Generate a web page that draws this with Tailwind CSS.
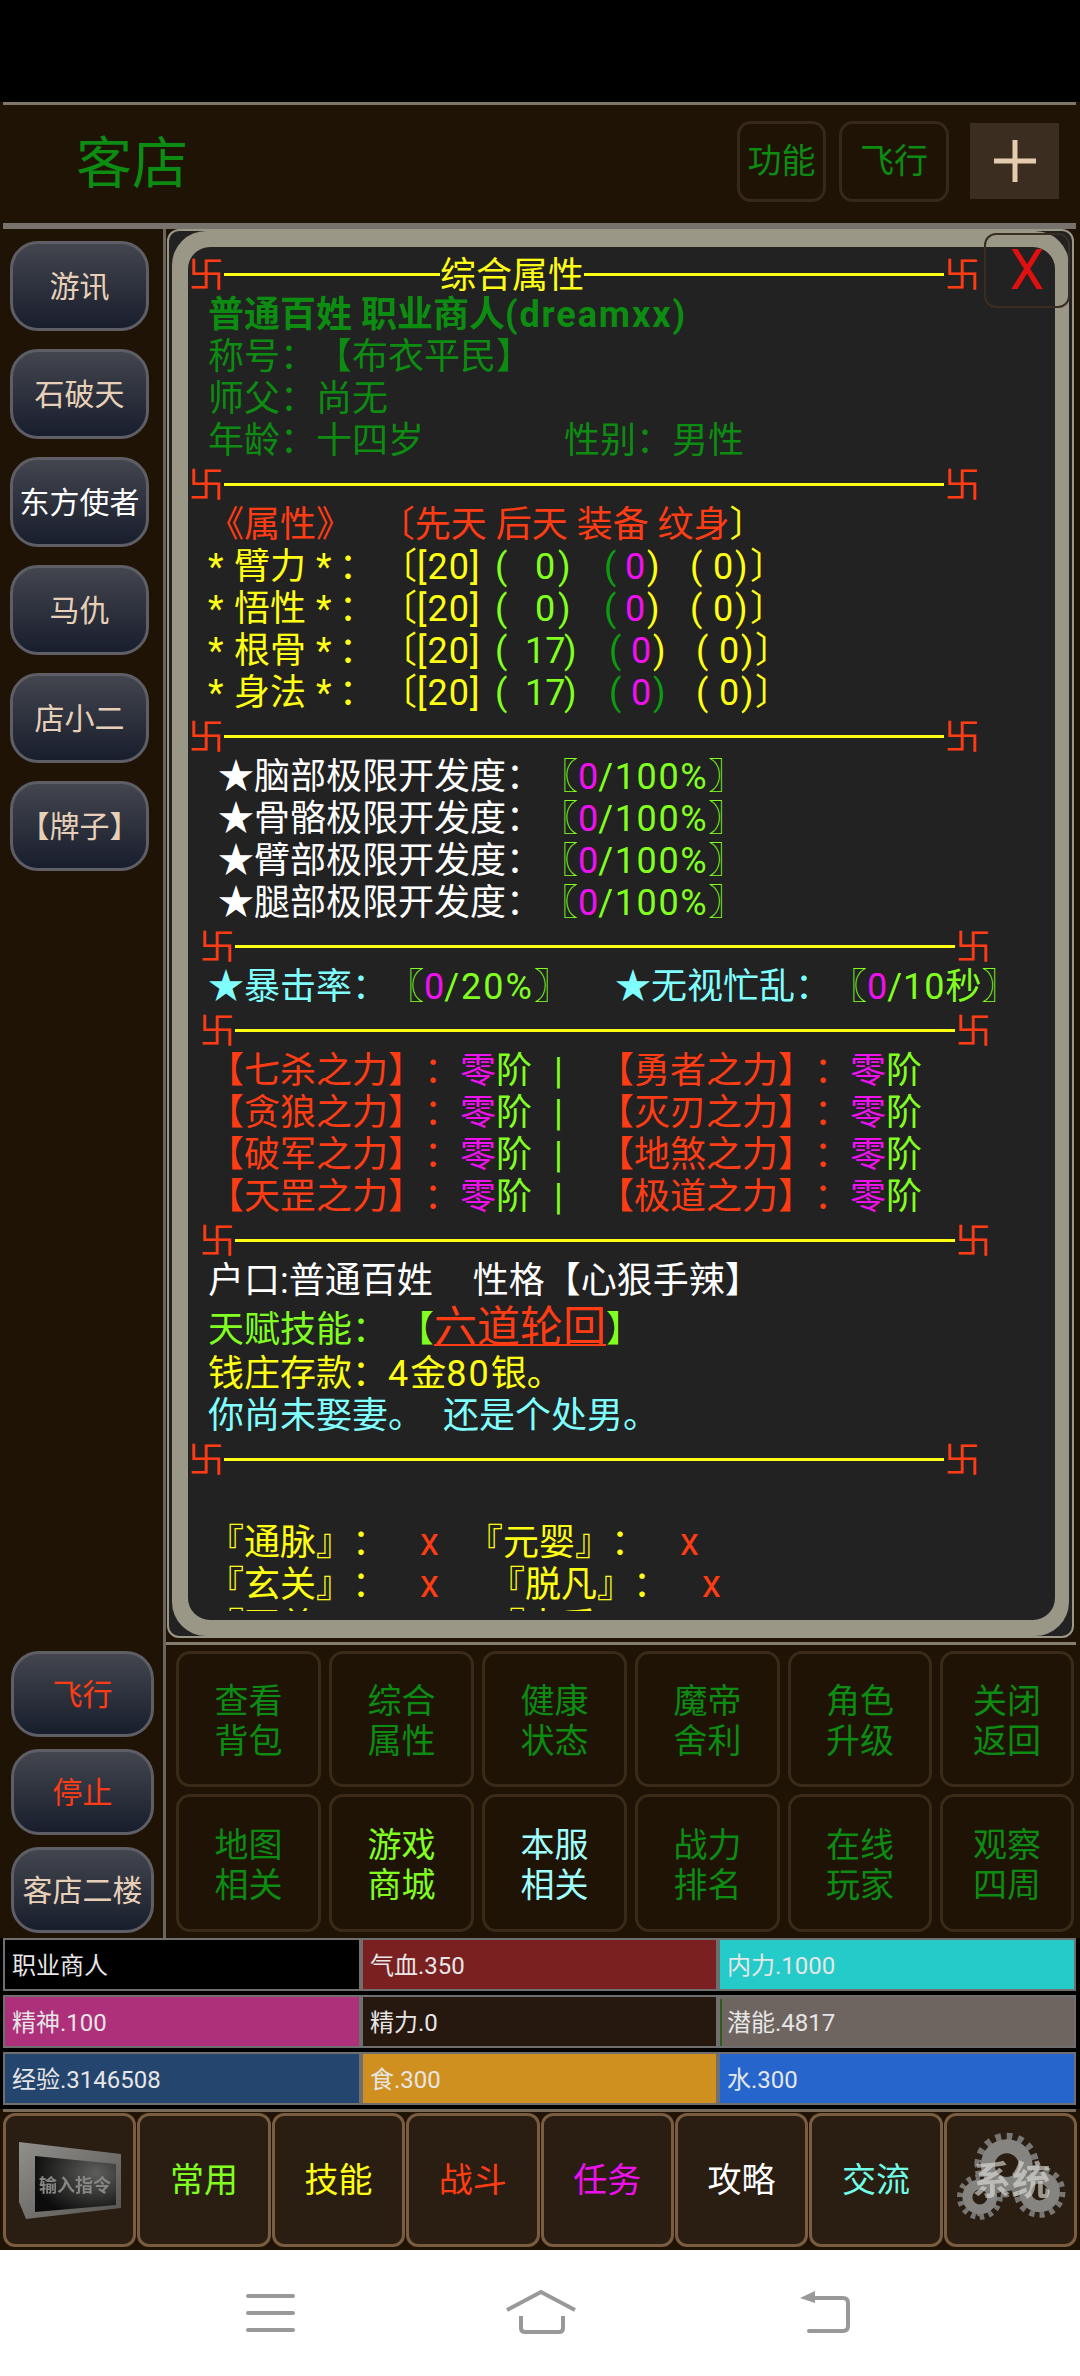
<!DOCTYPE html>
<html lang="zh-CN">
<head>
<meta charset="utf-8">
<script src="https://cdn.jsdelivr.net/npm/@tailwindcss/browser@4"></script>
</head>
<body class="m-0 bg-[#1f1305]">
<div class="w-[1080px] h-[2376px] overflow-hidden flex flex-col bg-[#1f1305] [font-family:Roboto,'Noto_Sans_CJK_SC',sans-serif] [text-spacing-trim:space-all]">
  <div class="h-[102px] bg-black shrink-0"></div>
  <div class="h-[3px] ml-[3px] mr-[4px] bg-[#7f766b] shrink-0"></div>

  <header class="h-[118px] shrink-0 flex items-center">
    <div class="pl-[76px] text-[56px] leading-none text-[#0c8c10] flex-1">客店</div>
    <div class="w-[89px] h-[81px] mb-[6px] flex items-center justify-center rounded-[14px] border-[3px] border-[#36281a] text-[34px] text-[#0c8c10]">功能</div>
    <div class="w-[110px] h-[81px] mb-[6px] ml-[13px] flex items-center justify-center rounded-[14px] border-[3px] border-[#36281a] text-[34px] text-[#0c8c10]">飞行</div>
    <div class="w-[89px] h-[76px] mb-[6px] ml-[21px] mr-[21px] flex items-center justify-center bg-[#3b2e20]">
      <svg width="42" height="42" viewBox="0 0 42 42"><path d="M21 0V42M0 21H42" stroke="#e6ccae" stroke-width="5" fill="none"/></svg>
    </div>
  </header>
  <div class="h-[6px] ml-[3px] mr-[4px] bg-[#77736c] shrink-0"></div>

  <div class="h-[1709px] shrink-0 flex">
    <aside class="w-[163px] shrink-0 flex flex-col justify-between">
      <div class="pt-[12px] pl-[10px] flex flex-col gap-[18px]">
        <div class="w-[139px] h-[90px] rounded-[28px] border-[3px] border-[#5e5e66] bg-gradient-to-b from-[#43464e] to-[#191e2d] flex items-center justify-center text-[30px] text-[#e8d0b8]">游讯</div>
        <div class="w-[139px] h-[90px] rounded-[28px] border-[3px] border-[#5e5e66] bg-gradient-to-b from-[#43464e] to-[#191e2d] flex items-center justify-center text-[30px] text-[#e8d0b8]">石破天</div>
        <div class="w-[139px] h-[90px] rounded-[28px] border-[3px] border-[#5e5e66] bg-gradient-to-b from-[#43464e] to-[#191e2d] flex items-center justify-center text-[30px] text-white">东方使者</div>
        <div class="w-[139px] h-[90px] rounded-[28px] border-[3px] border-[#5e5e66] bg-gradient-to-b from-[#43464e] to-[#191e2d] flex items-center justify-center text-[30px] text-[#e8d0b8]">马仇</div>
        <div class="w-[139px] h-[90px] rounded-[28px] border-[3px] border-[#5e5e66] bg-gradient-to-b from-[#43464e] to-[#191e2d] flex items-center justify-center text-[30px] text-[#e8d0b8]">店小二</div>
        <div class="w-[139px] h-[90px] rounded-[28px] border-[3px] border-[#5e5e66] bg-gradient-to-b from-[#43464e] to-[#191e2d] flex items-center justify-center text-[30px] text-[#e8d0b8]">【牌子】</div>
      </div>
      <div class="pb-[5px] pl-[11px] flex flex-col gap-[12px]">
        <div class="w-[143px] h-[86px] rounded-[28px] border-[3px] border-[#5e5e66] bg-gradient-to-b from-[#43464e] to-[#191e2d] flex items-center justify-center text-[30px] text-[#ff3c14]">飞行</div>
        <div class="w-[143px] h-[86px] rounded-[28px] border-[3px] border-[#5e5e66] bg-gradient-to-b from-[#43464e] to-[#191e2d] flex items-center justify-center text-[30px] text-[#ff3c14]">停止</div>
        <div class="w-[143px] h-[86px] rounded-[28px] border-[3px] border-[#5e5e66] bg-gradient-to-b from-[#43464e] to-[#191e2d] flex items-center justify-center text-[30px] text-[#e8d0b8]">客店二楼</div>
      </div>
    </aside>
    <div class="w-[3px] shrink-0 bg-[#6a665e]"></div>

    <main class="flex-1 flex flex-col min-w-0">
      <section class="relative h-[1409px] ml-[1px] mr-[6px] rounded-[12px] border-2 border-[#9a9786] bg-[#222222] px-[3px] py-0 shrink-0">
        <div class="h-full rounded-[34px] bg-[#9a9786] pl-[16px] pr-[14px] pt-[16px] pb-[16px]">
          <div class="h-full rounded-[22px] bg-[#222222] overflow-hidden">
            <div class="h-[1364px] overflow-hidden pt-[4px] flex flex-col *:shrink-0 text-[36px] leading-[45px] whitespace-pre">
              <div class="h-[42px] leading-[42px] text-[#ffff14] [font-family:'Noto_Sans_CJK_SC',sans-serif]"><span class="text-[#ff3c14]">卐</span><span class="bg-[linear-gradient(#ffff14,#ffff14)] bg-no-repeat bg-[length:100%_3px] bg-[position:0_27px]">——————</span>综合属性<span class="bg-[linear-gradient(#ffff14,#ffff14)] bg-no-repeat bg-[length:100%_3px] bg-[position:0_27px]">——————————</span><span class="text-[#ff3c14]">卐</span></div>
              <div class="h-[42px] pl-[20px] font-bold text-[#0c8c10]">普通百姓 职业商人<span class="tracking-[1.9px]">(dreamxx)</span></div>
              <div class="h-[42px] pl-[20px] text-[#0c8c10]">称号：【布衣平民】</div>
              <div class="h-[42px] pl-[20px] text-[#0c8c10]">师父：尚无</div>
              <div class="h-[42px] pl-[20px] text-[#0c8c10]">年龄：十四岁<span class="ml-[140px]">性别：男性</span></div>
              <div class="h-[42px] leading-[42px] text-[#ffff14] [font-family:'Noto_Sans_CJK_SC',sans-serif]"><span class="text-[#ff3c14]">卐</span><span class="bg-[linear-gradient(#ffff14,#ffff14)] bg-no-repeat bg-[length:100%_3px] bg-[position:0_27px]">————————————————————</span><span class="text-[#ff3c14]">卐</span></div>

              <div class="h-[42px] pl-[20px] text-[#ff3c14]">《属性》   〔先天 后天 装备 纹身<span class="text-[#ffff14]">〕</span></div>
              <div class="h-[42px] pl-[20px] text-[#ffff14]"><span class="inline-block w-[26px]">*</span><span class="inline-block w-[82px]">臂力</span><span class="inline-block w-[23px]">*</span><span class="inline-block w-[42px]">：</span><span class="inline-block w-[36px]">〔</span><span class="inline-block w-[78px] tracking-[1px]">[20]</span><span class="inline-block w-[40px] text-[#80ff20]">(</span><span class="inline-block w-[23px] text-[#80ff20]">0</span><span class="inline-block w-[46px] text-[#80ff20]">)</span><span class="inline-block w-[21px] text-[#0c9c10]">(</span><span class="inline-block w-[22px] text-[#f010f0]">0</span><span class="inline-block w-[43px]">)</span><span class="inline-block w-[23px]">(</span><span class="inline-block w-[22px]">0</span><span class="inline-block w-[15px]">)</span>〕</div>
              <div class="h-[42px] pl-[20px] text-[#ffff14]"><span class="inline-block w-[26px]">*</span><span class="inline-block w-[82px]">悟性</span><span class="inline-block w-[23px]">*</span><span class="inline-block w-[42px]">：</span><span class="inline-block w-[36px]">〔</span><span class="inline-block w-[78px] tracking-[1px]">[20]</span><span class="inline-block w-[40px] text-[#80ff20]">(</span><span class="inline-block w-[23px] text-[#80ff20]">0</span><span class="inline-block w-[46px] text-[#80ff20]">)</span><span class="inline-block w-[21px] text-[#0c9c10]">(</span><span class="inline-block w-[22px] text-[#f010f0]">0</span><span class="inline-block w-[43px]">)</span><span class="inline-block w-[23px]">(</span><span class="inline-block w-[22px]">0</span><span class="inline-block w-[15px]">)</span>〕</div>
              <div class="h-[42px] pl-[20px] text-[#ffff14]"><span class="inline-block w-[26px]">*</span><span class="inline-block w-[82px]">根骨</span><span class="inline-block w-[23px]">*</span><span class="inline-block w-[42px]">：</span><span class="inline-block w-[36px]">〔</span><span class="inline-block w-[78px] tracking-[1px]">[20]</span><span class="inline-block w-[30px] text-[#80ff20]">(</span><span class="inline-block w-[39px] text-[#80ff20]">17</span><span class="inline-block w-[45px] text-[#80ff20]">)</span><span class="inline-block w-[22px] text-[#0c9c10]">(</span><span class="inline-block w-[22px] text-[#f010f0]">0</span><span class="inline-block w-[43px]">)</span><span class="inline-block w-[23px]">(</span><span class="inline-block w-[22px]">0</span><span class="inline-block w-[14px]">)</span>〕</div>
              <div class="h-[42px] pl-[20px] text-[#ffff14]"><span class="inline-block w-[26px]">*</span><span class="inline-block w-[82px]">身法</span><span class="inline-block w-[23px]">*</span><span class="inline-block w-[42px]">：</span><span class="inline-block w-[36px]">〔</span><span class="inline-block w-[78px] tracking-[1px]">[20]</span><span class="inline-block w-[30px] text-[#80ff20]">(</span><span class="inline-block w-[39px] text-[#80ff20]">17</span><span class="inline-block w-[45px] text-[#80ff20]">)</span><span class="inline-block w-[22px] text-[#0c9c10]">(</span><span class="inline-block w-[22px] text-[#f010f0]">0</span><span class="inline-block w-[43px] text-[#0c9c10]">)</span><span class="inline-block w-[23px]">(</span><span class="inline-block w-[22px]">0</span><span class="inline-block w-[14px]">)</span>〕</div>
              <div class="h-[42px] leading-[42px] text-[#ffff14] [font-family:'Noto_Sans_CJK_SC',sans-serif]"><span class="text-[#ff3c14]">卐</span><span class="bg-[linear-gradient(#ffff14,#ffff14)] bg-no-repeat bg-[length:100%_3px] bg-[position:0_27px]">————————————————————</span><span class="text-[#ff3c14]">卐</span></div>

              <div class="h-[42px] pl-[30px] text-white">★脑部极限开发度：<span class="text-[#80ff20]">〖<span class="text-[#f010f0]">0</span><span class="tracking-[1.6px]">/100%</span>〗</span></div>
              <div class="h-[42px] pl-[30px] text-white">★骨骼极限开发度：<span class="text-[#80ff20]">〖<span class="text-[#f010f0]">0</span><span class="tracking-[1.6px]">/100%</span>〗</span></div>
              <div class="h-[42px] pl-[30px] text-white">★臂部极限开发度：<span class="text-[#80ff20]">〖<span class="text-[#f010f0]">0</span><span class="tracking-[1.6px]">/100%</span>〗</span></div>
              <div class="h-[42px] pl-[30px] text-white">★腿部极限开发度：<span class="text-[#80ff20]">〖<span class="text-[#f010f0]">0</span><span class="tracking-[1.6px]">/100%</span>〗</span></div>
              <div class="h-[42px] leading-[42px] pl-[11px] text-[#ffff14] [font-family:'Noto_Sans_CJK_SC',sans-serif]"><span class="text-[#ff3c14]">卐</span><span class="bg-[linear-gradient(#ffff14,#ffff14)] bg-no-repeat bg-[length:100%_3px] bg-[position:0_27px]">————————————————————</span><span class="text-[#ff3c14]">卐</span></div>

              <div class="h-[42px] pl-[20px] text-[#80ffff]">★暴击率：<span class="text-[#80ff20]">〖<span class="text-[#f010f0]">0</span><span class="tracking-[2px]">/20%</span>〗</span><span class="ml-[45px]">★无视忙乱：</span><span class="text-[#80ff20]">〖<span class="text-[#f010f0]">0</span><span class="tracking-[1px]">/10</span>秒〗</span></div>
              <div class="h-[42px] leading-[42px] pl-[11px] text-[#ffff14] [font-family:'Noto_Sans_CJK_SC',sans-serif]"><span class="text-[#ff3c14]">卐</span><span class="bg-[linear-gradient(#ffff14,#ffff14)] bg-no-repeat bg-[length:100%_3px] bg-[position:0_27px]">————————————————————</span><span class="text-[#ff3c14]">卐</span></div>

              <div class="h-[42px] pl-[20px] text-[#ff3c14]">【七杀之力】：<span class="text-[#f010f0]">零</span><span class="text-[#80ff20]">阶<span class="inline-block w-[22px]"></span><span class="inline-block w-[44px]">|</span></span>【勇者之力】：<span class="text-[#f010f0]">零</span><span class="text-[#80ff20]">阶</span></div>
              <div class="h-[42px] pl-[20px] text-[#ff3c14]">【贪狼之力】：<span class="text-[#f010f0]">零</span><span class="text-[#80ff20]">阶<span class="inline-block w-[22px]"></span><span class="inline-block w-[44px]">|</span></span>【灭刃之力】：<span class="text-[#f010f0]">零</span><span class="text-[#80ff20]">阶</span></div>
              <div class="h-[42px] pl-[20px] text-[#ff3c14]">【破军之力】：<span class="text-[#f010f0]">零</span><span class="text-[#80ff20]">阶<span class="inline-block w-[22px]"></span><span class="inline-block w-[44px]">|</span></span>【地煞之力】：<span class="text-[#f010f0]">零</span><span class="text-[#80ff20]">阶</span></div>
              <div class="h-[42px] pl-[20px] text-[#ff3c14]">【天罡之力】：<span class="text-[#f010f0]">零</span><span class="text-[#80ff20]">阶<span class="inline-block w-[22px]"></span><span class="inline-block w-[44px]">|</span></span>【极道之力】：<span class="text-[#f010f0]">零</span><span class="text-[#80ff20]">阶</span></div>
              <div class="h-[42px] leading-[42px] pl-[11px] text-[#ffff14] [font-family:'Noto_Sans_CJK_SC',sans-serif]"><span class="text-[#ff3c14]">卐</span><span class="bg-[linear-gradient(#ffff14,#ffff14)] bg-no-repeat bg-[length:100%_3px] bg-[position:0_27px]">————————————————————</span><span class="text-[#ff3c14]">卐</span></div>

              <div class="h-[42px] pl-[20px] text-white">户口:普通百姓<span class="ml-[40px]">性格【心狠手辣】</span></div>
              <div class="h-[51px] leading-[53px] pl-[20px] text-[#80ff20]">天赋技能：<span class="ml-[10px]">【</span><span class="text-[43px] text-[#ff3c14] underline decoration-2 underline-offset-[2px]">六道轮回</span>】</div>
              <div class="h-[42px] pl-[20px] text-[#ffff14]">钱庄存款：<span class="tracking-[2px]">4</span>金<span class="tracking-[2px]">80</span>银。</div>
              <div class="h-[42px] pl-[20px] text-[#80ffff]">你尚未娶妻。  <span class="ml-[1px]">还是个处男。</span></div>
              <div class="h-[42px] leading-[42px] text-[#ffff14] [font-family:'Noto_Sans_CJK_SC',sans-serif]"><span class="text-[#ff3c14]">卐</span><span class="bg-[linear-gradient(#ffff14,#ffff14)] bg-no-repeat bg-[length:100%_3px] bg-[position:0_27px]">————————————————————</span><span class="text-[#ff3c14]">卐</span></div>
              <div class="h-[42px]"></div>
              <div class="h-[42px] pl-[20px] text-[#ffff14]">『通脉』：<span class="ml-[32px] text-[38px] text-[#ff3c14]">x</span><span class="ml-[28px]">『元婴』：</span><span class="ml-[33px] text-[38px] text-[#ff3c14]">x</span></div>
              <div class="h-[42px] pl-[20px] text-[#ffff14]">『玄关』：<span class="ml-[32px] text-[38px] text-[#ff3c14]">x</span><span class="ml-[50px]">『脱凡』：</span><span class="ml-[33px] text-[38px] text-[#ff3c14]">x</span></div>
              <div class="h-[42px] pl-[20px] text-[#ffff14]">『至尊』：<span class="ml-[32px] text-[38px] text-[#ff3c14]">x</span><span class="ml-[50px]">『大乘』：</span><span class="ml-[33px] text-[38px] text-[#ff3c14]">x</span></div>
            </div>
          </div>
        </div>
        <div class="absolute top-[2px] right-[2px] w-[86px] h-[75px] rounded-[12px] border-2 border-[#3a2e22] flex items-center justify-center text-[55px] leading-none text-[#e01010]">X</div>
      </section>
      <div class="h-[3px] mt-[4px] mr-[4px] bg-[#857d6f] shrink-0"></div>
      <div class="pt-[6px] pl-[10px] grid grid-cols-[145px_145px_145px_145px_144px_134px] grid-rows-[136px_138px] gap-x-[8px] gap-y-[7px] text-[34px] leading-[40px] text-[#0c8c10] text-center">
        <div class="pt-[3px] rounded-[14px] border-[3px] border-[#3a2a18] flex items-center justify-center">查看<br>背包</div>
        <div class="pt-[3px] rounded-[14px] border-[3px] border-[#3a2a18] flex items-center justify-center">综合<br>属性</div>
        <div class="pt-[3px] rounded-[14px] border-[3px] border-[#3a2a18] flex items-center justify-center">健康<br>状态</div>
        <div class="pt-[3px] rounded-[14px] border-[3px] border-[#3a2a18] flex items-center justify-center">魔帝<br>舍利</div>
        <div class="pt-[3px] rounded-[14px] border-[3px] border-[#3a2a18] flex items-center justify-center">角色<br>升级</div>
        <div class="pt-[3px] rounded-[14px] border-[3px] border-[#3a2a18] flex items-center justify-center">关闭<br>返回</div>
        <div class="pt-[3px] rounded-[14px] border-[3px] border-[#3a2a18] flex items-center justify-center">地图<br>相关</div>
        <div class="pt-[3px] rounded-[14px] border-[3px] border-[#3a2a18] flex items-center justify-center text-[#80ff20]">游戏<br>商城</div>
        <div class="pt-[3px] rounded-[14px] border-[3px] border-[#3a2a18] flex items-center justify-center text-[#a0ffff]">本服<br>相关</div>
        <div class="pt-[3px] rounded-[14px] border-[3px] border-[#3a2a18] flex items-center justify-center">战力<br>排名</div>
        <div class="pt-[3px] rounded-[14px] border-[3px] border-[#3a2a18] flex items-center justify-center">在线<br>玩家</div>
        <div class="pt-[3px] rounded-[14px] border-[3px] border-[#3a2a18] flex items-center justify-center">观察<br>四周</div>
      </div>
    </main>
  </div>

  <div class="bg-black h-[171px] shrink-0 pl-[3px] pr-[4px] flex flex-col gap-[4px] text-[24px] text-[#e6e6e6]">
    <div class="grid grid-cols-[358px_357px_358px] h-[53px]">
      <div class="border-2 border-[#6f6f6f] bg-black flex items-center pl-[7px] pt-[2px]">职业商人</div>
      <div class="border-2 border-[#6f6f6f] bg-[#7a2020] flex items-center pl-[7px] pt-[2px]">气血.350</div>
      <div class="border-2 border-[#6f6f6f] bg-[#25cbc8] flex items-center pl-[7px] pt-[2px]">内力.1000</div>
    </div>
    <div class="grid grid-cols-[358px_357px_358px] h-[53px]">
      <div class="border-2 border-[#6f6f6f] bg-[#ae2f7a] flex items-center pl-[7px] pt-[2px]">精神.100</div>
      <div class="border-2 border-[#6f6f6f] bg-[#26170f] flex items-center pl-[7px] pt-[2px]">精力.0</div>
      <div class="border-2 border-[#6f6f6f] bg-[#6e6560] flex items-center pt-[2px]"><div class="w-[2px] h-full bg-[#2e5a20] mr-[5px]"></div>潜能.4817</div>
    </div>
    <div class="grid grid-cols-[358px_357px_358px] h-[53px]">
      <div class="border-2 border-[#6f6f6f] bg-[#24456e] flex items-center pl-[7px] pt-[2px]">经验.3146508</div>
      <div class="border-2 border-[#6f6f6f] bg-[#d09020] flex items-center pl-[7px] pt-[2px]">食.300</div>
      <div class="border-2 border-[#6f6f6f] bg-[#2565cc] flex items-center pl-[7px] pt-[2px]">水.300</div>
    </div>
  </div>
  <div class="h-[3px] ml-[3px] mr-[4px] bg-[#7a6a5a] shrink-0"></div>

  <nav class="h-[138px] shrink-0 pl-[3px] pt-[1px] grid grid-cols-8 w-[1077px] gap-x-px text-[34px]">
    <div class="h-[134px] rounded-[12px] border-[3px] border-[#7a5c40] bg-[#2a1d12] flex items-center justify-center">
      <svg class="blur-[0.7px]" width="106" height="80" viewBox="0 0 106 80">
        <defs>
          <linearGradient id="fr" x1="0" y1="0" x2="1" y2="1"><stop offset="0" stop-color="#8f8f8b"/><stop offset="0.6" stop-color="#6e6c68"/><stop offset="1" stop-color="#55534f"/></linearGradient>
          <radialGradient id="sc" cx="0.75" cy="0.3" r="0.8"><stop offset="0" stop-color="#5e5e5c"/><stop offset="1" stop-color="#0c0c0c"/></radialGradient>
        </defs>
        <path d="M2 2 L104 14 V68 L9 79 L2 62 Z" fill="url(#fr)"/>
        <path d="M18 16 L99 24 V65 L18 72 Z" fill="url(#sc)"/>
        <text x="22" y="52" font-size="18" font-weight="700" fill="#868684">输入指令</text>
      </svg>
    </div>
    <div class="h-[134px] rounded-[12px] border-[3px] border-[#7a5c40] bg-[#2a1d12] flex items-center justify-center text-[#80ff20]">常用</div>
    <div class="h-[134px] rounded-[12px] border-[3px] border-[#7a5c40] bg-[#2a1d12] flex items-center justify-center text-[#ffff14]">技能</div>
    <div class="h-[134px] rounded-[12px] border-[3px] border-[#7a5c40] bg-[#2a1d12] flex items-center justify-center text-[#ff3c14]">战斗</div>
    <div class="h-[134px] rounded-[12px] border-[3px] border-[#7a5c40] bg-[#2a1d12] flex items-center justify-center text-[#f010f0]">任务</div>
    <div class="h-[134px] rounded-[12px] border-[3px] border-[#7a5c40] bg-[#2a1d12] flex items-center justify-center text-white">攻略</div>
    <div class="h-[134px] rounded-[12px] border-[3px] border-[#7a5c40] bg-[#2a1d12] flex items-center justify-center text-[#70ffe8]">交流</div>
    <div class="h-[134px] rounded-[12px] border-[3px] border-[#7a5c40] bg-[#2a1d12] flex items-center justify-center">
      <svg class="blur-[0.5px]" width="128" height="128" viewBox="0 0 128 128">
        <g fill="none">
          <circle cx="60" cy="49" r="29" stroke="#777673" stroke-width="7" pathLength="32" stroke-dasharray="1 1"/>
          <circle cx="60" cy="49" r="19" stroke="#858480" stroke-width="14"/>
          <circle cx="33" cy="81" r="20" stroke="#777673" stroke-width="6" pathLength="28" stroke-dasharray="1 1"/>
          <circle cx="33" cy="81" r="12.5" stroke="#858480" stroke-width="10"/>
          <circle cx="93" cy="76" r="23" stroke="#777673" stroke-width="6" pathLength="28" stroke-dasharray="1 1"/>
          <circle cx="93" cy="76" r="14.5" stroke="#858480" stroke-width="12"/>
        </g>
        <text x="26" y="78" font-size="39" font-weight="700" fill="#e0e0dc" fill-opacity="0.62">系统</text>
      </svg>
    </div>
  </nav>

  <div class="flex-1 bg-white pt-[39px] flex items-start">
    <svg class="ml-[246px]" width="49" height="50" viewBox="0 0 49 50"><path d="M2 7H47M2 24H47M2 41H47" stroke="#999999" stroke-width="4" stroke-linecap="round" fill="none"/></svg>
    <svg class="ml-[211px]" width="70" height="50" viewBox="0 0 70 50"><path d="M1 21L35 3L69 21M15 27V39Q15 43 19 43H53Q57 43 57 39V27" stroke="#999999" stroke-width="4" fill="none"/></svg>
    <svg class="ml-[223px]" width="52" height="50" viewBox="0 0 52 50"><path d="M16 2V14L1 9Z" fill="#999999"/><path d="M14 9H44Q49 9 49 14V37Q49 42 44 42H10" stroke="#999999" stroke-width="4" stroke-linecap="round" fill="none"/></svg>
  </div>
</div>
</body>
</html>
